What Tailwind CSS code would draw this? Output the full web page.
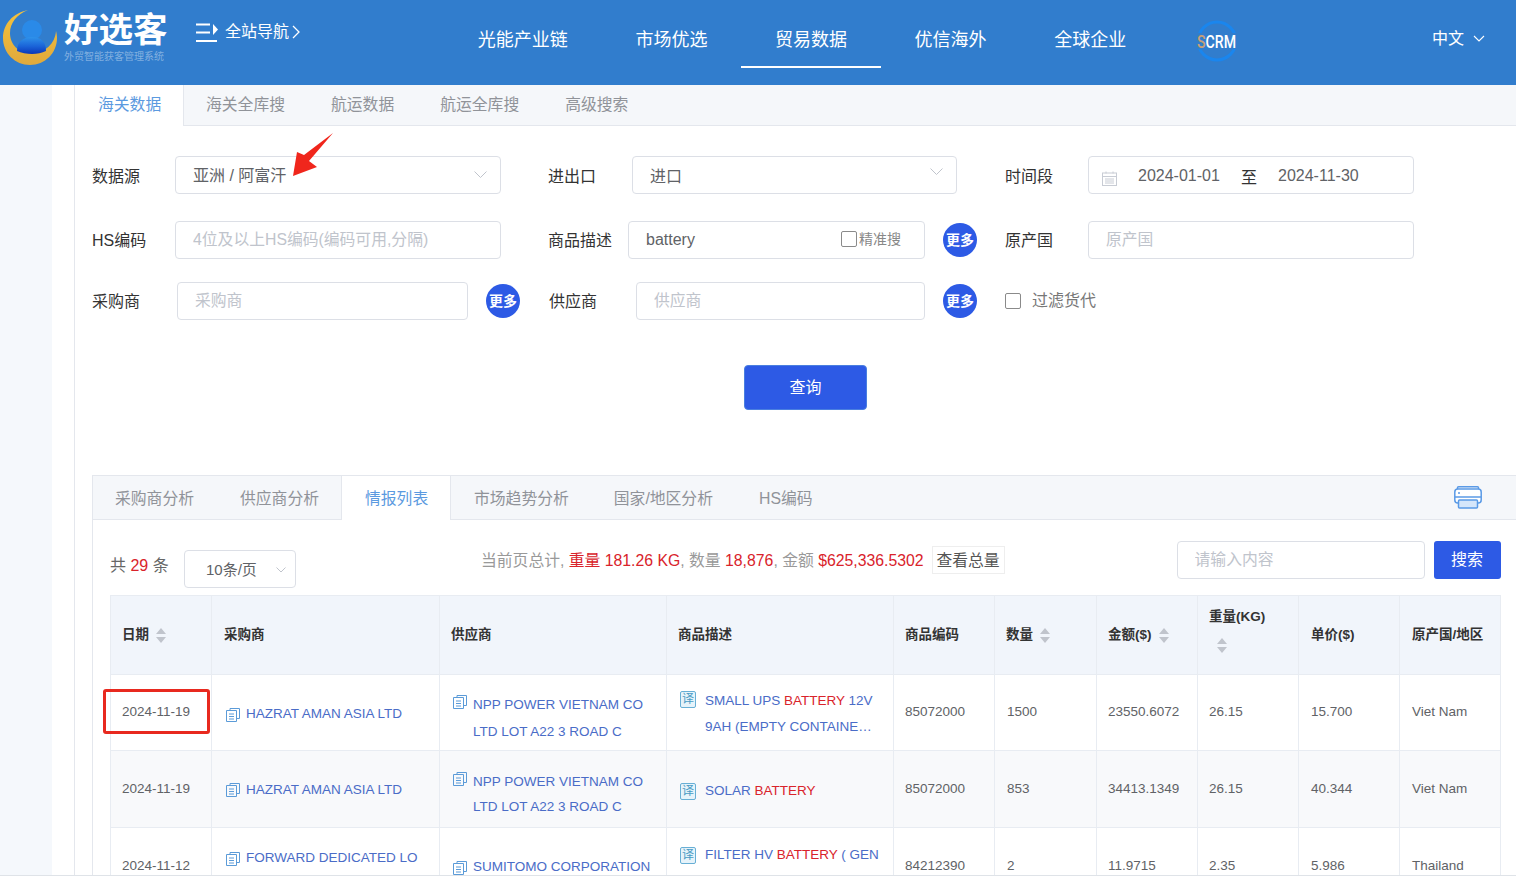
<!DOCTYPE html>
<html lang="zh-CN">
<head>
  <meta charset="UTF-8">
  <title>好选客 - 贸易数据</title>
  <meta name="viewport" content="width=device-width, initial-scale=1.0">
  <script src="https://cdn.jsdelivr.net/npm/@tailwindcss/browser@4"></script>
</head>
<body class="relative w-[1516px] h-[876px] overflow-hidden bg-white text-[#333] font-['Liberation_Sans','Noto_Sans_CJK_SC',sans-serif]">

  <!-- top bar -->
  <header class="flex h-[85px] bg-[#317dcd] text-white">
    <svg class="ml-[3px] mt-[10px] w-[56px] h-[56px] shrink-0" viewBox="0 0 56 56">
      <defs>
        <linearGradient id="moon" x1="0" y1="0" x2="0" y2="1"><stop offset="0" stop-color="#f4c23c"/><stop offset="1" stop-color="#e0a93c"/></linearGradient>
        <linearGradient id="man" x1="0" y1="0" x2="0" y2="1"><stop offset="0" stop-color="#2f93ea"/><stop offset="0.55" stop-color="#1a63d8"/><stop offset="1" stop-color="#0a36b8"/></linearGradient>
      </defs>
      <path d="M25 0C10 3 0 14 0 28c0 15 12 27 27 27s27-12 27-27c0-3-.5-5-1-7-1 13-11 22-25 22C15 43 7 34 7 23 7 13 14 4 25 0z" fill="url(#moon)"/>
      <circle cx="29" cy="20" r="10" fill="#2a8ae8"/>
      <path d="M14 41c0-9 6-14 15-14s14 5 14 14c-4 2-9 3-14 3s-11-1-15-3z" fill="url(#man)"/>
    </svg>
    <div class="ml-[5px] w-[104px] shrink-0">
      <div class="mt-[10px] text-[34.500px] leading-[40px] font-bold whitespace-nowrap">好选客</div>
      <div class="mt-[1px] text-[10px] leading-[12px] text-white/40 whitespace-nowrap">外贸智能获客管理系统</div>
    </div>
    <div class="ml-[28px] mt-[22px] flex h-[20px] items-center shrink-0">
      <svg class="w-[23px] h-[20px]" viewBox="0 0 23 20" fill="none">
        <path d="M0 2.500h14M0 10.500h14M0 19h21" stroke="#fff" stroke-width="2"/>
        <path d="M17 2l5 5.500-5 5.500z" fill="#fff"/>
      </svg>
      <span class="ml-[6px] text-[16px] leading-[20px]">全站导航</span>
      <svg class="ml-[3px] w-[8px] h-[14px]" viewBox="0 0 8 14" fill="none"><path d="M1 1l6 6-6 6" stroke="#fff" stroke-width="1.300"/></svg>
    </div>
    <nav class="absolute left-[444px] top-0 flex h-[68px] text-[18px]">
      <a class="px-[33.800px] pt-[27px] leading-[26px] whitespace-nowrap">光能产业链</a>
      <a class="px-[33.800px] pt-[27px] leading-[26px] whitespace-nowrap">市场优选</a>
      <a class="px-[33.800px] pt-[27px] leading-[26px] whitespace-nowrap border-b-2 border-white">贸易数据</a>
      <a class="px-[33.800px] pt-[27px] leading-[26px] whitespace-nowrap">优信海外</a>
      <a class="px-[33.800px] pt-[27px] leading-[26px] whitespace-nowrap">全球企业</a>
      <a class="pl-[36px] pt-[20px]">
        <svg class="w-[42px] h-[42px] overflow-visible" viewBox="0 0 42 42">
          <circle cx="21" cy="21" r="19" fill="none" stroke="#1a86ee" stroke-width="3"/>
          <rect x="0" y="13" width="42" height="16" fill="#317dcd"/>
          <text x="1" y="28" font-family="Roboto" font-weight="500" font-size="19" textLength="39" lengthAdjust="spacingAndGlyphs" fill="#fff"><tspan fill="#c8a077">S</tspan>CRM</text>
        </svg>
      </a>
    </nav>
    <div class="absolute left-[1432px] top-[27px] flex items-center">
      <span class="text-[16px] leading-[24px]">中文</span>
      <svg class="ml-[9px] w-[12px] h-[8px]" viewBox="0 0 12 8" fill="none"><path d="M1 1l5 5 5-5" stroke="#fff" stroke-width="1.100"/></svg>
    </div>
  </header>

  <div class="flex h-[791px]">
    <aside class="w-[52px] shrink-0 bg-[#f5f8fc]"></aside>
    <div class="w-[22px] shrink-0"></div>

    <main class="flex-1 border-l border-[#e4e7ed]">
      <!-- search tabs -->
      <div class="flex h-[41px] border-b border-[#e4e7ed] bg-[#f5f7fa] text-[15.800px] text-[#909399]">
        <span class="w-[109px] -mb-px h-[41px] border-r border-[#e4e7ed] bg-white pl-[23px] leading-[40px] text-[#5b9ae0]">海关数据</span>
        <span class="ml-[22px] leading-[40px]">海关全库搜</span>
        <span class="ml-[46px] leading-[40px]">航运数据</span>
        <span class="ml-[46px] leading-[40px]">航运全库搜</span>
        <span class="ml-[46px] leading-[40px]">高级搜索</span>
      </div>

      <!-- form -->
      <section class="pl-[17px] pt-[30px] text-[16px]">
        <div class="flex h-[38px] items-center">
          <label class="w-[83px] shrink-0 pt-[4px]">数据源</label>
          <div class="flex h-[38px] w-[326px] items-center justify-between rounded border border-[#dcdfe6] pl-[17px] pr-[13px] text-[#606266]">
            <span class="pt-[2px]">亚洲 / 阿富汗</span>
            <svg class="w-[13px] h-[8px]" viewBox="0 0 13 8" fill="none"><path d="M.5.500l6 6 6-6" stroke="#c0c4cc"/></svg>
          </div>
          <label class="ml-[47px] w-[84px] shrink-0 pt-[4px]">进出口</label>
          <div class="flex h-[38px] w-[325px] items-center justify-between rounded border border-[#dcdfe6] pl-[17px] pr-[13px] text-[#606266]">
            <span class="pt-[4px]">进口</span>
            <svg class="mb-[6px] w-[13px] h-[8px]" viewBox="0 0 13 8" fill="none"><path d="M.5.500l6 6 6-6" stroke="#c0c4cc"/></svg>
          </div>
          <label class="ml-[48px] w-[83px] shrink-0 pt-[4px]">时间段</label>
          <div class="flex h-[38px] w-[326px] items-center rounded border border-[#dcdfe6] pl-[13px] text-[#606266]">
            <svg class="mt-[6px] w-[15px] h-[15px] shrink-0" viewBox="0 0 15 15" fill="none" stroke="#c8ccd4">
              <rect x=".5" y="2" width="14" height="12.500"/><path d="M.5 5.500h14M3 8h9M3 10h9M3 12h9M4 .5v2M11 .5v2"/>
            </svg>
            <span class="ml-[21px] w-[81px] pt-[1px] whitespace-nowrap">2024-01-01</span>
            <span class="ml-[22px] pt-[6px] text-[#333]">至</span>
            <span class="ml-[21px] pt-[1px] whitespace-nowrap">2024-11-30</span>
          </div>
        </div>

        <div class="mt-[27px] flex h-[38px] items-center">
          <label class="w-[83px] shrink-0 pt-[2px]">HS编码</label>
          <input class="h-[38px] w-[326px] rounded border border-[#dcdfe6] pl-[17px] text-[15.800px] outline-none placeholder:text-[#c0c4cc]" placeholder="4位及以上HS编码(编码可用,分隔)">
          <label class="ml-[47px] w-[80px] shrink-0 pt-[2px]">商品描述</label>
          <div class="flex h-[38px] w-[297px] items-center rounded border border-[#dcdfe6] pl-[17px] text-[#606266]">
            <span class="w-[195px]">battery</span>
            <span class="mb-[2px] h-[16px] w-[16px] rounded-[2px] border border-[#8a8a8a]"></span>
            <span class="mb-[2px] ml-[2px] text-[14px] text-[#888]">精准搜</span>
          </div>
          <button class="ml-[18px] h-[34px] w-[34px] rounded-full bg-[#2d5ae5] text-[14px] font-bold text-white">更多</button>
          <label class="ml-[28px] w-[83px] shrink-0 pt-[2px]">原产国</label>
          <input class="h-[38px] w-[326px] rounded border border-[#dcdfe6] pl-[17px] text-[15.800px] outline-none placeholder:text-[#c0c4cc]" placeholder="原产国">
        </div>

        <div class="mt-[23px] flex h-[38px] items-center">
          <label class="w-[85px] shrink-0 pt-[2px]">采购商</label>
          <input class="h-[38px] w-[291px] rounded border border-[#dcdfe6] pl-[17px] text-[15.800px] outline-none placeholder:text-[#c0c4cc]" placeholder="采购商">
          <button class="ml-[18px] h-[34px] w-[34px] rounded-full bg-[#2d5ae5] text-[14px] font-bold text-white">更多</button>
          <label class="ml-[29px] w-[87px] shrink-0 pt-[2px]">供应商</label>
          <input class="h-[38px] w-[289px] rounded border border-[#dcdfe6] pl-[17px] text-[15.800px] outline-none placeholder:text-[#c0c4cc]" placeholder="供应商">
          <button class="ml-[18px] h-[34px] w-[34px] rounded-full bg-[#2d5ae5] text-[14px] font-bold text-white">更多</button>
          <span class="ml-[28px] h-[16px] w-[16px] rounded-[2px] border border-[#8a8a8a]"></span>
          <span class="ml-[11px] text-[#777]">过滤货代</span>
        </div>

        <button class="ml-[652px] mt-[45px] block h-[45px] w-[123px] rounded border border-[#4a7fe0] bg-[#2d5ae5] text-[16px] text-white">查询</button>
      </section>

      <!-- results panel -->
      <section class="ml-[17px] mt-[65px] border-l border-t border-[#e4e7ed]">
        <div class="flex h-[44px] items-center border-b border-[#e4e7ed] bg-[#f5f7fa] text-[15.800px] text-[#909399]">
          <span class="ml-[22px] mt-[2px]">采购商分析</span>
          <span class="ml-[46px] mt-[2px]">供应商分析</span>
          <span class="-mb-px ml-[22px] h-[44px] w-[110px] border-x border-[#e4e7ed] bg-white pl-[23px] leading-[46px] text-[#5b9ae0]">情报列表</span>
          <span class="ml-[23px] mt-[2px]">市场趋势分析</span>
          <span class="ml-[45px] mt-[2px]">国家/地区分析</span>
          <span class="ml-[46px] mt-[2px]">HS编码</span>
          <svg class="ml-auto mr-[34px] w-[28px] h-[23px]" viewBox="0 0 28 23" fill="none" stroke="#5a9ae6" stroke-width="1.500">
            <rect x="3.500" y=".8" width="21" height="4" rx="1"/>
            <rect x=".8" y="3" width="26.400" height="14" rx="3" fill="#fff"/>
            <path d="M1 11h26"/>
            <rect x="4.500" y="14" width="19" height="8" rx="1" fill="#d5e6fa"/>
            <circle cx="5" cy="7" r="1" fill="#5a9ae6" stroke="none"/>
          </svg>
        </div>

        <div class="flex h-[75px] items-start pl-[17px]">
          <span class="mt-[36px] w-[74px] text-[16px] leading-[20px] text-[#666]">共 <span class="text-[#d9232b]">29</span> 条</span>
          <div class="mt-[30px] flex h-[38px] w-[112px] items-center justify-between rounded border border-[#dcdfe6] pl-[21px] pr-[9px] text-[15px] text-[#606266]">
            <span class="pt-[2px]">10条/页</span>
            <svg class="mt-[2px] w-[10px] h-[6px]" viewBox="0 0 10 6" fill="none"><path d="M.5.500l4.500 4.500 4.500-4.500" stroke="#c0c4cc"/></svg>
          </div>
          <div class="ml-[185px] mt-[31px] whitespace-nowrap text-[15.800px] leading-[20px] text-[#999]">当前页总计, <span class="text-[#d9232b]">重量 181.26 KG</span>, 数量 <span class="text-[#d9232b]">18,876</span>, 金额 <span class="text-[#d9232b]">$625,336.5302</span></div>
          <span class="ml-[8px] mt-[26px] h-[28px] w-[73px] border border-[#eeeeee] text-center text-[15.800px] leading-[27px] text-[#555]">查看总量</span>
          <input class="ml-[172px] mt-[21px] h-[38px] w-[248px] rounded border border-[#dcdfe6] pl-[17px] text-[15.800px] outline-none placeholder:text-[#c0c4cc]" placeholder="请输入内容">
          <button class="ml-[9px] mt-[21px] h-[38px] w-[67px] rounded-[3px] bg-[#2d5ae5] text-[16px] text-white">搜索</button>
        </div>

        <table class="ml-[17px] w-[1390px] table-fixed border-collapse text-left text-[13.500px] text-[#606266]">
          <colgroup>
            <col class="w-[101px]"><col class="w-[228px]"><col class="w-[227px]"><col class="w-[227px]"><col class="w-[101px]">
            <col class="w-[102px]"><col class="w-[101px]"><col class="w-[101px]"><col class="w-[101px]"><col class="w-[101px]">
          </colgroup>
          <thead class="bg-[#f1f5fb] text-[13.500px] font-bold text-[#333]">
            <tr class="h-[79px]">
              <th class="border border-[#e8ecf2] pl-[11px]"><span class="flex items-center gap-[7px]">日期<svg class="w-[10px] h-[15px]" viewBox="0 0 10 15" fill="#c0c4cc"><path d="M5 0l5 6H0zM5 15L0 9h10z"/></svg></span></th>
              <th class="border border-[#e8ecf2] pl-[12px]">采购商</th>
              <th class="border border-[#e8ecf2] pl-[11px]">供应商</th>
              <th class="border border-[#e8ecf2] pl-[11px]">商品描述</th>
              <th class="border border-[#e8ecf2] pl-[11px]">商品编码</th>
              <th class="border border-[#e8ecf2] pl-[11px]"><span class="flex items-center gap-[7px]">数量<svg class="w-[10px] h-[15px]" viewBox="0 0 10 15" fill="#c0c4cc"><path d="M5 0l5 6H0zM5 15L0 9h10z"/></svg></span></th>
              <th class="border border-[#e8ecf2] pl-[11px]"><span class="flex items-center gap-[7px]">金额($)<svg class="w-[10px] h-[15px]" viewBox="0 0 10 15" fill="#c0c4cc"><path d="M5 0l5 6H0zM5 15L0 9h10z"/></svg></span></th>
              <th class="border border-[#e8ecf2] pl-[11px] align-top pt-[11px]">
                <span class="block leading-[20px]">重量(KG)</span>
                <svg class="ml-[8px] mt-[11px] w-[10px] h-[15px]" viewBox="0 0 10 15" fill="#c0c4cc"><path d="M5 0l5 6H0zM5 15L0 9h10z"/></svg>
              </th>
              <th class="border border-[#e8ecf2] pl-[12px]">单价($)</th>
              <th class="border border-[#e8ecf2] pl-[12px]">原产国/地区</th>
            </tr>
          </thead>
          <tbody>
            <tr class="h-[76px]">
              <td class="border border-[#e8ecf2] pl-[11px] pb-[1px]">2024-11-19</td>
              <td class="border border-[#e8ecf2] pl-[14px] pt-[4px] text-[#4a6cc7]">
                <div class="flex items-center gap-[6px]">
                  <svg class="w-[14px] h-[14px] shrink-0" viewBox="0 0 14 14" fill="none" stroke="#5b9bd8"><path d="M4 2.500V.5h9.500v10H11M.5 2.500h10v11H.5zM3 6h5M3 8.500h5M3 11h5"/></svg>
                  <span>HAZRAT AMAN ASIA LTD</span>
                </div>
              </td>
              <td class="border border-[#e8ecf2] pl-[13px] pt-[11px] text-[#4a6cc7]">
                <div class="flex gap-[6px] leading-[27px]">
                  <svg class="mt-[4px] w-[14px] h-[14px] shrink-0" viewBox="0 0 14 14" fill="none" stroke="#5b9bd8"><path d="M4 2.500V.5h9.500v10H11M.5 2.500h10v11H.5zM3 6h5M3 8.500h5M3 11h5"/></svg>
                  <span>NPP POWER VIETNAM CO<br>LTD LOT A22 3 ROAD C</span>
                </div>
              </td>
              <td class="border border-[#e8ecf2] pl-[13px] pt-[2px] text-[#4a6cc7]">
                <div class="flex gap-[9px] leading-[26px]">
                  <span class="mt-[3px] h-[17px] w-[16px] shrink-0 rounded-[2px] border border-[#68afd5] bg-[#e6f3fa] text-center text-[12px] leading-[15px] text-[#4a9bc4]">译</span>
                  <span>SMALL UPS <span class="text-[#d9232b]">BATTERY</span> 12V<br>9AH (EMPTY CONTAINE…</span>
                </div>
              </td>
              <td class="border border-[#e8ecf2] pl-[11px] pb-[1px]">85072000</td>
              <td class="border border-[#e8ecf2] pl-[12px] pb-[1px]">1500</td>
              <td class="border border-[#e8ecf2] pl-[11px] pb-[1px]">23550.6072</td>
              <td class="border border-[#e8ecf2] pl-[11px] pb-[1px]">26.15</td>
              <td class="border border-[#e8ecf2] pl-[12px] pb-[1px]">15.700</td>
              <td class="border border-[#e8ecf2] pl-[12px] pb-[1px]">Viet Nam</td>
            </tr>
            <tr class="h-[77px] bg-[#f8f9fb]">
              <td class="border border-[#e8ecf2] pl-[11px] pt-[1px]">2024-11-19</td>
              <td class="border border-[#e8ecf2] pl-[14px] pt-[2px] text-[#4a6cc7]">
                <div class="flex items-center gap-[6px]">
                  <svg class="w-[14px] h-[14px] shrink-0" viewBox="0 0 14 14" fill="none" stroke="#5b9bd8"><path d="M4 2.500V.5h9.500v10H11M.5 2.500h10v11H.5zM3 6h5M3 8.500h5M3 11h5"/></svg>
                  <span>HAZRAT AMAN ASIA LTD</span>
                </div>
              </td>
              <td class="border border-[#e8ecf2] pl-[13px] pt-[9px] text-[#4a6cc7]">
                <div class="flex gap-[6px] leading-[25px]">
                  <svg class="mt-[3px] w-[14px] h-[14px] shrink-0" viewBox="0 0 14 14" fill="none" stroke="#5b9bd8"><path d="M4 2.500V.5h9.500v10H11M.5 2.500h10v11H.5zM3 6h5M3 8.500h5M3 11h5"/></svg>
                  <span>NPP POWER VIETNAM CO<br>LTD LOT A22 3 ROAD C</span>
                </div>
              </td>
              <td class="border border-[#e8ecf2] pl-[13px] pt-[4px] text-[#4a6cc7]">
                <div class="flex items-center gap-[9px]">
                  <span class="h-[17px] w-[16px] shrink-0 rounded-[2px] border border-[#68afd5] bg-[#e6f3fa] text-center text-[12px] leading-[15px] text-[#4a9bc4]">译</span>
                  <span>SOLAR <span class="text-[#d9232b]">BATTERY</span></span>
                </div>
              </td>
              <td class="border border-[#e8ecf2] pl-[11px] pt-[1px]">85072000</td>
              <td class="border border-[#e8ecf2] pl-[12px] pt-[1px]">853</td>
              <td class="border border-[#e8ecf2] pl-[11px] pt-[1px]">34413.1349</td>
              <td class="border border-[#e8ecf2] pl-[11px] pt-[1px]">26.15</td>
              <td class="border border-[#e8ecf2] pl-[12px] pt-[1px]">40.344</td>
              <td class="border border-[#e8ecf2] pl-[12px] pt-[1px]">Viet Nam</td>
            </tr>
            <tr class="h-[76px]">
              <td class="border border-[#e8ecf2] pl-[11px] pt-[2px]">2024-11-12</td>
              <td class="border border-[#e8ecf2] pl-[14px] pb-[14px] text-[#4a6cc7]">
                <div class="flex items-center gap-[6px]">
                  <svg class="w-[14px] h-[14px] shrink-0" viewBox="0 0 14 14" fill="none" stroke="#5b9bd8"><path d="M4 2.500V.5h9.500v10H11M.5 2.500h10v11H.5zM3 6h5M3 8.500h5M3 11h5"/></svg>
                  <span>FORWARD DEDICATED LO</span>
                </div>
              </td>
              <td class="border border-[#e8ecf2] pl-[13px] pt-[4px] text-[#4a6cc7]">
                <div class="flex items-center gap-[6px]">
                  <svg class="w-[14px] h-[14px] shrink-0" viewBox="0 0 14 14" fill="none" stroke="#5b9bd8"><path d="M4 2.500V.5h9.500v10H11M.5 2.500h10v11H.5zM3 6h5M3 8.500h5M3 11h5"/></svg>
                  <span class="whitespace-nowrap">SUMITOMO CORPORATION</span>
                </div>
              </td>
              <td class="border border-[#e8ecf2] pl-[13px] pb-[20px] text-[#4a6cc7]">
                <div class="flex items-center gap-[9px]">
                  <span class="h-[17px] w-[16px] shrink-0 rounded-[2px] border border-[#68afd5] bg-[#e6f3fa] text-center text-[12px] leading-[15px] text-[#4a9bc4]">译</span>
                  <span class="whitespace-nowrap">FILTER HV <span class="text-[#d9232b]">BATTERY</span> ( GEN</span>
                </div>
              </td>
              <td class="border border-[#e8ecf2] pl-[11px] pt-[2px]">84212390</td>
              <td class="border border-[#e8ecf2] pl-[12px] pt-[2px]">2</td>
              <td class="border border-[#e8ecf2] pl-[11px] pt-[2px]">11.9715</td>
              <td class="border border-[#e8ecf2] pl-[11px] pt-[2px]">2.35</td>
              <td class="border border-[#e8ecf2] pl-[12px] pt-[2px]">5.986</td>
              <td class="border border-[#e8ecf2] pl-[12px] pt-[2px]">Thailand</td>
            </tr>
          </tbody>
        </table>
      </section>
    </main>
  </div>

  <!-- annotations on top of the screenshot -->
  <svg class="absolute left-[290px] top-[130px] w-[46px] h-[48px]" viewBox="0 0 46 48">
    <path d="M43 3L19 31l8 6L3 46 7 22l7 3z" fill="#f0261c"/>
  </svg>
  <div class="absolute left-[103px] top-[689px] h-[45px] w-[107px] rounded-[3px] border-[3px] border-[#e8291f]"></div>
  <div class="absolute bottom-0 left-0 h-px w-full bg-[#dfe3e8]"></div>
</body>
</html>
